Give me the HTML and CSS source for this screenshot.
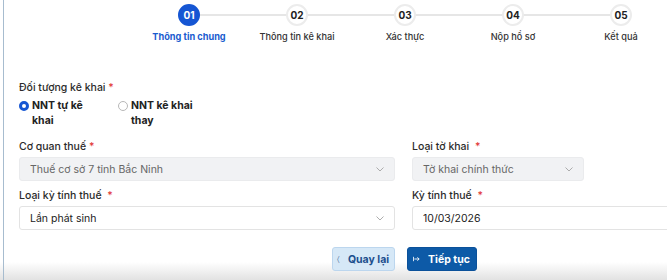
FILE: index.html
```html
<!DOCTYPE html>
<html lang="vi">
<head>
    <meta charset="UTF-8">
    <meta name="viewport" content="width=device-width, initial-scale=1.0">
    <title>Kê khai thuế</title>
    <link rel="stylesheet" href="styles.css">
</head>
<body>

<main class="page">

    <!-- Steps -->
    <ol class="steps">
        <li class="steps__item steps__item--active">
            <span class="steps__circle">01</span>
            <span class="steps__label">Thông tin chung</span>
        </li>
        <li class="steps__item">
            <span class="steps__circle">02</span>
            <span class="steps__label">Thông tin kê khai</span>
        </li>
        <li class="steps__item">
            <span class="steps__circle">03</span>
            <span class="steps__label">Xác thực</span>
        </li>
        <li class="steps__item">
            <span class="steps__circle">04</span>
            <span class="steps__label">Nộp hồ sơ</span>
        </li>
        <li class="steps__item">
            <span class="steps__circle">05</span>
            <span class="steps__label">Kết quả</span>
        </li>
    </ol>

    <form class="form">
        <div class="field">
            <div class="field__label">Đối tượng kê khai <span class="req">*</span></div>
            <div class="radios">
                <label class="radio radio--checked"><span class="radio__dot"></span><span>NNT tự kê khai</span></label>
                <label class="radio"><span class="radio__dot"></span><span>NNT kê khai thay</span></label>
            </div>
        </div>

        <div class="grid">
            <div class="field">
                <div class="field__label">Cơ quan thuế <span class="req">*</span></div>
                <div class="select select--disabled">
                    <span>Thuế cơ sở 7 tỉnh Bắc Ninh</span>
                    <svg class="chevron" viewBox="0 0 8 5"><path d="M0.5 0.5 L4 4 L7.5 0.5"/></svg>
                </div>
            </div>
            <div class="field">
                <div class="field__label">Loại tờ khai <span class="req req--spaced">*</span></div>
                <div class="select select--disabled select--short">
                    <span>Tờ khai chính thức</span>
                    <svg class="chevron" viewBox="0 0 8 5"><path d="M0.5 0.5 L4 4 L7.5 0.5"/></svg>
                </div>
            </div>
            <div class="field">
                <div class="field__label">Loại kỳ tính thuế <span class="req req--spaced">*</span></div>
                <div class="select">
                    <span>Lần phát sinh</span>
                    <svg class="chevron" viewBox="0 0 8 5"><path d="M0.5 0.5 L4 4 L7.5 0.5"/></svg>
                </div>
            </div>
            <div class="field">
                <div class="field__label">Kỳ tính thuế <span class="req req--spaced">*</span></div>
                <div class="select">
                    <span>10/03/2026</span>
                </div>
            </div>
        </div>

        <div class="actions">
            <button type="button" class="btn btn--back"><span class="btn__icon">&#x2329;</span>Quay lại</button>
            <button type="button" class="btn btn--next">
                <svg class="btn__svg" viewBox="0 0 8 6"><path d="M0.5 0.5 V5.5 M1.5 3 H7 M5 1 L7 3 L5 5"/></svg>
                Tiếp tục
            </button>
        </div>
    </form>

</main>

</body>
</html>
```

FILE: styles.css
```css
/* General styles */
* {
    box-sizing: border-box;
}
html {
    background: linear-gradient(to bottom, #ffffff 262px, #e2e2e2 280px) no-repeat;
    background-color: #e2e2e2;
}
body {
    margin: 0;
    font-family: 'Inter', 'Noto Sans', sans-serif;
    color: #2b2b2b;
}
.page {
    margin-left: 3px;
    height: 280px;
    border-left: 1px solid #a7bccf;
    overflow: hidden;
}

/* Steps */
.steps {
    display: flex;
    list-style: none;
    margin: 0;
    padding: 4px 0 0 131px;
}
.steps__item {
    width: 108px;
    flex: none;
    display: flex;
    flex-direction: column;
    align-items: center;
    background-image: linear-gradient(#e6e6e6, #e6e6e6);
    background-size: 100% 2px;
    background-position: 0 10px;
    background-repeat: no-repeat;
}
.steps__item:first-child {
    background-size: 50% 2px;
    background-position: right 0 top 10px;
}
.steps__item:last-child {
    background-size: 50% 2px;
}
.steps__circle {
    width: 22px;
    height: 22px;
    border-radius: 50%;
    background: #fff;
    border: 2px solid #ececec;
    display: flex;
    align-items: center;
    justify-content: center;
    font-size: 10px;
    font-weight: 700;
    color: #222;
}
.steps__label {
    margin-top: 5px;
    font-size: 9.2px;
    line-height: 12px;
    font-weight: 500;
    color: #333;
    white-space: nowrap;
}
.steps__item--active .steps__circle {
    background: #1656d3;
    border-color: #1656d3;
    color: #fff;
}
.steps__item--active .steps__label {
    color: #1a5ccf;
    font-weight: 700;
}

/* Form */
.form {
    padding: 38px 0 0 15px;
    width: 800px;
}
.field__label {
    font-size: 10.5px;
    line-height: 14px;
    font-weight: 500;
    color: #2b2b2b;
    margin-bottom: 3px;
}
.req {
    color: #e23b3b;
}
.req--spaced {
    margin-left: 3px;
}
.radios {
    display: flex;
}
.radio {
    width: 99px;
    display: flex;
    align-items: flex-start;
    gap: 3px;
    font-size: 10.5px;
    line-height: 15px;
    font-weight: 700;
    color: #222;
}
.radio span:last-child {
    width: 70px;
}
.radio__dot {
    flex: none;
    width: 10px;
    height: 10px;
    margin-top: 3px;
    border-radius: 50%;
    border: 1px solid #b8b8b8;
}
.radio--checked .radio__dot {
    border: 3px solid #1656d3;
}

.grid {
    display: grid;
    grid-template-columns: 376px 376px;
    column-gap: 17px;
    row-gap: 8px;
    margin-top: 12px;
}
.select {
    height: 24px;
    display: flex;
    align-items: center;
    justify-content: space-between;
    padding: 0 10px;
    border: 1px solid #e3e3e3;
    border-radius: 3px;
    background: #fff;
    font-size: 10.5px;
    color: #222;
}
.select--disabled {
    background: #f1f2f4;
    border-color: #eaebed;
    color: #666;
}
.select--short {
    width: 172px;
}
.chevron {
    width: 8px;
    height: 5px;
    fill: none;
    stroke: #a4a4a4;
    stroke-width: 0.9;
}

/* Actions */
.actions {
    display: flex;
    justify-content: center;
    gap: 12px;
    margin-top: 17px;
    padding-right: 15px;
}
.btn {
    height: 24px;
    padding: 0;
    display: flex;
    align-items: center;
    justify-content: center;
    gap: 8px;
    border-radius: 3px;
    font-family: inherit;
    font-size: 10.5px;
    font-weight: 700;
    white-space: nowrap;
    cursor: pointer;
}
.btn--back {
    width: 63px;
    background: #d6e8f7;
    border: 1px solid #bcd6ee;
    color: #1d4f8e;
}
.btn__icon {
    font-size: 8px;
    font-weight: 400;
    color: #5b7fa8;
}
.btn--next {
    width: 70px;
    background: #0d5aa7;
    border: 1px solid #0b519a;
    color: #fff;
}
.btn__svg {
    width: 7px;
    height: 6px;
    fill: none;
    stroke: #fff;
    stroke-width: 1;
}
```
